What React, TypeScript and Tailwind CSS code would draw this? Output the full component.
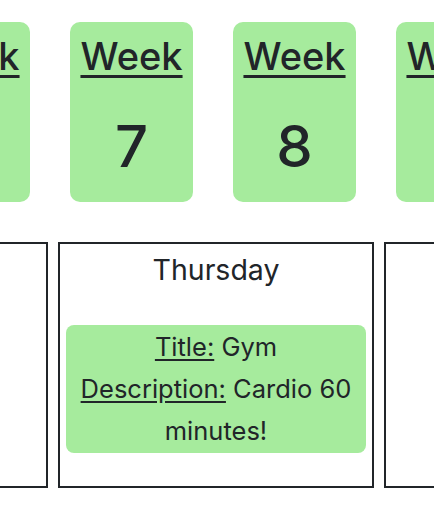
const weeks = [6, 7, 8, 9];

const days = [
  { name: "Wednesday", tasks: [] as { title: string; description: string }[] },
  {
    name: "Thursday",
    tasks: [{ title: "Gym", description: "Cardio 60 minutes!" }],
  },
  { name: "Friday", tasks: [] as { title: string; description: string }[] },
];

const WeekCard = ({ num }: { num: number }) => (
  <div className="w-[123px] h-[180px] shrink-0 rounded-[10px] bg-[#a6eb9d] flex flex-col items-center pt-[12px]">
    <div className="text-[38px] font-medium leading-[1.2] underline underline-offset-[5px] decoration-[3px]">
      Week
    </div>
    <div className="text-[58px] font-medium leading-[1.2] mt-[32px]">{num}</div>
  </div>
);

export default function App() {
  return (
    <div
      className="w-[434px] h-[518px] overflow-hidden bg-white text-[#212529]"
      style={{ fontFamily: "Inter, 'Noto Sans', sans-serif" }}
    >
      <div className="flex gap-10 pt-[22px] ml-[-93px]">
        {weeks.map((w) => (
          <WeekCard key={w} num={w} />
        ))}
      </div>
      <div className="flex gap-[10px] mt-10 ml-[-268px]">
        {days.map((d) => (
          <div
            key={d.name}
            className="w-[316px] h-[246px] shrink-0 border-2 border-[#212529] px-[6px] flex flex-col"
          >
            <div className="text-center text-[28.5px] leading-[1.2] pt-[9px]">{d.name}</div>
            <div className="mt-[38px] flex flex-col gap-2">
              {d.tasks.map((t) => (
                <div
                  key={t.title}
                  className="rounded-[8px] bg-[#a6eb9d] text-center text-[25.5px] leading-[42px] py-[1px] px-2"
                >
                  <span className="underline underline-offset-[3px]">Title:</span> {t.title}
                  <br />
                  <span className="underline underline-offset-[3px]">Description:</span>{" "}
                  {t.description}
                </div>
              ))}
            </div>
          </div>
        ))}
      </div>
    </div>
  );
}
